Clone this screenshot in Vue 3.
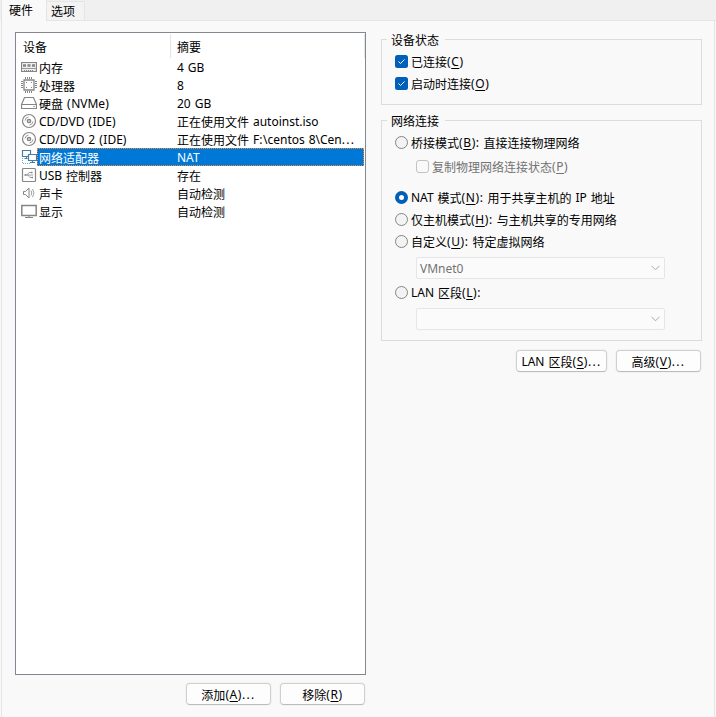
<script setup>
import { h } from 'vue'

const devices = [
  { icon: 'memory', name: '内存', summary: '4 GB' },
  { icon: 'cpu', name: '处理器', summary: '8' },
  { icon: 'disk', name: '硬盘 (NVMe)', summary: '20 GB' },
  { icon: 'cd', name: 'CD/DVD (IDE)', summary: '正在使用文件 autoinst.iso' },
  { icon: 'cd', name: 'CD/DVD 2 (IDE)', summary: '正在使用文件 F:\\centos 8\\Cen...' },
  { icon: 'network', name: '网络适配器', summary: 'NAT', selected: true },
  { icon: 'usb', name: 'USB 控制器', summary: '存在' },
  { icon: 'sound', name: '声卡', summary: '自动检测' },
  { icon: 'display', name: '显示', summary: '自动检测' },
]

// Renders a caption as runs; the character after "&" is the underlined access key.
const Caption = (props) =>
  h('span', { class: 'caption' }, props.text.split(/(&\w|\.{3}|[():]|[\u4e00-\u9fff]+)/).map((part) => {
    if (part.startsWith('&')) return h('u', part.slice(1))
    if (part === '...') return h('span', { class: 'dots' }, part)
    if (/^[():]$/.test(part)) return h('span', { class: 'punct' }, part)
    if (/^[\u4e00-\u9fff]/.test(part)) return h('span', { class: 'han' }, part)
    return part
  }))
Caption.props = ['text']
</script>

<template>
  <div class="window">
    <nav class="tabs">
      <div class="tab active">硬件</div>
      <div class="tab">选项</div>
      <div class="tab-rest"></div>
    </nav>
    <main class="page">
      <section class="left">
        <div class="list">
          <div class="head">
            <div class="head-name">设备</div>
            <div class="head-summary">摘要</div>
          </div>
          <div v-for="d in devices" :key="d.name" class="row" :class="{ selected: d.selected }">
            <svg class="icon" width="16" height="18" viewBox="0 0 16 18" fill="none" stroke="#858585">
              <template v-if="d.icon === 'memory'">
                <path d="M.5 4.500h15v9H.5z" fill="#eee" stroke-width="1.2" />
                <path d="M2 7.500h3M6.500 7.500h3M11 7.500h3" stroke-width="2.400" />
                <path d="M1 10.500h14" stroke="#999" /><path d="M3 12.500h10" stroke-dasharray="1 1" />
              </template>
              <template v-else-if="d.icon === 'cpu'">
                <path d="M3 4h10v10H3z" stroke-width="1.300" />
                <path d="M4.500 1v2M6.500 1v2M8.500 1v2M10.500 1v2M4.500 15v2M6.500 15v2M8.500 15v2M10.500 15v2M0 5.500h2M0 7.500h2M0 9.500h2M0 11.500h2M14 5.500h2M14 7.500h2M14 9.500h2M14 11.500h2" />
                <path d="M5 6.500h1M10 6.500h1M5 11.500h1M10 11.500h1" />
              </template>
              <template v-else-if="d.icon === 'disk'">
                <path d="M3.500 3.500h9l3 7v4H.5v-4zM.5 10.500h15" stroke-width="1.200" /><path d="M12 12.500h2" stroke="#aaa" />
              </template>
              <template v-else-if="d.icon === 'cd'">
                <circle cx="8" cy="9" r="6.500" stroke-width="1.200" /><circle cx="8" cy="9" r="1.600" stroke-width="1.500" />
                <path d="M4 8.500Q4.500 5.500 7.500 5M12 9.500Q11.500 12.500 8.500 13" stroke="#999" />
              </template>
              <template v-else-if="d.icon === 'network'">
                <path d="M1.500 2.500h8v6h-8z" stroke="#417fa8" stroke-width="1.200" />
                <path d="M3.500 10.500h3M5.500 8.500v2" stroke="#417fa8" />
                <path d="M7.500 6.500h8v6h-8zM11.500 12.500v2M9 14.500h5" stroke="#417fa8" stroke-width="1.200" fill="#fff" />
                <path d="M1.500 10v5M2 15.500h8" stroke="#80aac5" stroke-dasharray="1 1" />
              </template>
              <template v-else-if="d.icon === 'usb'">
                <rect x="1.500" y="2.500" width="13" height="13" rx="1" stroke-width="1.200" />
                <path d="M4 9h8M6 9l2-2.500h2M7 9l2 2.500h2" stroke-width=".8" />
                <path d="M3.500 9h2M10 6.500h1.500M10.500 11.500h1.500" stroke-width="1.600" />
              </template>
              <template v-else-if="d.icon === 'sound'">
                <path d="M2.500 7.500H4.500L8 4v10L4.500 10.500h-2z" /><path d="M10 6.500q1.500 2.500 0 5M11.500 5q3 4 0 8" stroke="#a0a0a0" />
              </template>
              <template v-else>
                <path d="M.8 3.500h14.400v10H.8z" stroke-width="1.500" /><path d="M8 13v2M4 15.500h8" />
              </template>
            </svg>
            <div class="cells">
              <div class="name"><Caption :text="d.name" /></div>
              <div class="summary"><Caption :text="d.summary" /></div>
            </div>
          </div>
        </div>
        <div class="buttons">
          <button class="btn"><Caption text="添加(&A)..." /></button>
          <button class="btn"><Caption text="移除(&R)" /></button>
        </div>
      </section>

      <section class="right">
        <div class="group status">
          <div class="legend"><span><Caption text="设备状态" /></span></div>
          <label class="option">
            <svg class="mark" viewBox="0 0 13 13"><rect width="13" height="13" rx="2.500" fill="#005fb8" /><path d="M3.500 6.500l2 2 4-4" fill="none" stroke="#fff" /></svg>
            <Caption text="已连接(&C)" />
          </label>
          <label class="option">
            <svg class="mark" viewBox="0 0 13 13"><rect width="13" height="13" rx="2.500" fill="#005fb8" /><path d="M3.500 6.500l2 2 4-4" fill="none" stroke="#fff" /></svg>
            <Caption text="启动时连接(&O)" />
          </label>
        </div>

        <div class="group network">
          <div class="legend"><span><Caption text="网络连接" /></span></div>
          <label class="option"><i class="mark radio"></i><Caption text="桥接模式(&B): 直接连接物理网络" /></label>
          <label class="option sub"><i class="mark box"></i><Caption text="复制物理网络连接状态(&P)" /></label>
          <label class="option"><i class="mark radio on"></i><Caption text="NAT 模式(&N): 用于共享主机的 IP 地址" /></label>
          <label class="option"><i class="mark radio"></i><Caption text="仅主机模式(&H): 与主机共享的专用网络" /></label>
          <label class="option"><i class="mark radio"></i><Caption text="自定义(&U): 特定虚拟网络" /></label>
          <div class="select">
            <span>VMnet0</span>
            <svg width="9" height="6" viewBox="0 0 9 6"><path d="M.5.8l4 4 4-4" fill="none" stroke="#a9a9a9" /></svg>
          </div>
          <label class="option lan"><i class="mark radio"></i><Caption text="LAN 区段(&L):" /></label>
          <div class="select">
            <span></span>
            <svg width="9" height="6" viewBox="0 0 9 6"><path d="M.5.8l4 4 4-4" fill="none" stroke="#a9a9a9" /></svg>
          </div>
        </div>
        <div class="buttons">
          <button class="btn wide"><Caption text="LAN 区段(&S)..." /></button>
          <button class="btn"><Caption text="高级(&V)..." /></button>
        </div>
      </section>
    </main>
  </div>
</template>

<style>
body { background: #f9f9f9; overflow: hidden; }
.caption { white-space: pre; word-spacing: .8px; }
.caption u { text-decoration: underline; text-underline-offset: 2px; text-decoration-thickness: 1px; letter-spacing: .6px; }
.caption .punct { letter-spacing: .6px; }
.caption .dots { letter-spacing: 1.3px; }
.caption .han { line-height: 1; vertical-align: -1px; }
</style>

<style scoped>
* { box-sizing: border-box; }
.window {
  width: 716px; height: 717px; display: flex; flex-direction: column;
  background: #f9f9f9; color: #000;
  font: 12px/18px "Noto Sans", "Noto Sans CJK SC", sans-serif;
  white-space: pre;
}
.tabs { display: flex; height: 21px; background: #f0f0f0; }
.tab { width: 38px; margin-top: 1px; padding: 1px 0 0 4px; border: 1px solid #e5e5e5; border-left: 0; background: #f3f3f3; }
.tab.active { width: 46px; margin: 0; padding: 2px 0 0 7px; border: solid #e5e5e5; border-width: 0 1px 0 1px; margin-left: 1px; background: #f9f9f9; }
.tab-rest { flex: 1; border-bottom: 1px solid #e5e5e5; }
.page { flex: 1; display: flex; gap: 15px; margin: 0 1px; border: solid #e5e5e5; border-width: 0 1px; padding: 11px 12px 0 13px; }
.left { width: 351px; }
.list { height: 643px; border: 1px solid #828790; background: #fff; padding: 1px; }
.head { display: flex; height: 24px; line-height: 27px; width: 348px; border-right: 1px solid #e5e5e5; }
.head-name { width: 154px; padding-left: 6px; border-right: 1px solid #e5e5e5; }
.head-summary { padding-left: 6px; }
.row { display: flex; height: 18px; padding-left: 4px; }
.icon { flex: none; }
.cells { flex: 1; display: flex; line-height: 19px; }
.name { width: 140px; padding-left: 2px; }
.selected .cells { background: #0078d7; color: #fff; outline: 1px dotted #ff8728; outline-offset: -1px; }
.buttons { display: flex; justify-content: flex-end; gap: 9px; margin-top: 8px; }
.left .buttons { padding-right: 1px; }
.btn {
  width: 85px; height: 22px; padding: 1px 0 0; font: inherit; color: #000; background: #fdfdfd;
  border: 1px solid #d0d0d0; border-bottom-color: #bcbcbc; border-radius: 4px; box-shadow: 0 0 0 1px #f2f2f2;
}
.btn.wide { width: 91px; }
.right { width: 321px; padding-top: 7px; }
.right .buttons { margin-top: 9px; padding-right: 1px; }
.group { border: 1px solid #dcdcdc; padding-left: 13px; display: flex; flex-direction: column; }
.legend { height: 18px; margin: -20px 0 2px -8px; }
.legend span { display: inline-block; line-height: 18px; height: 18px; background: #f9f9f9; padding: 0 3px 0 2px; }
.status { height: 66px; padding-top: 11px; }
.option { display: flex; align-items: center; height: 22px; gap: 3px; }
.mark { width: 13px; height: 13px; flex: none; margin-bottom: 1px; }
.radio { border: 1px solid #858585; border-radius: 50%; background: #f3f3f3; }
.radio.on { border: 4px solid #005fb8; background: #fff; }
.box { border: 1px solid #c3c3c3; border-radius: 3px; }
.network { height: 221px; margin-top: 15px; padding-top: 11px; }
.option.sub { margin: 2px 0 9px 21px; color: #737373; }
.select { width: 249px; height: 22px; margin: 4px 0 0 21px; padding: 0 4px 0 3px; border: 1px solid #e6e6e6; border-radius: 2px; display: flex; align-items: center; justify-content: space-between; color: #737373; background: #fbfbfb; }
.select span { padding-top: 1px; }
.lan { margin-top: 3px; }
.lan + .select { margin-top: 4px; }
</style>
